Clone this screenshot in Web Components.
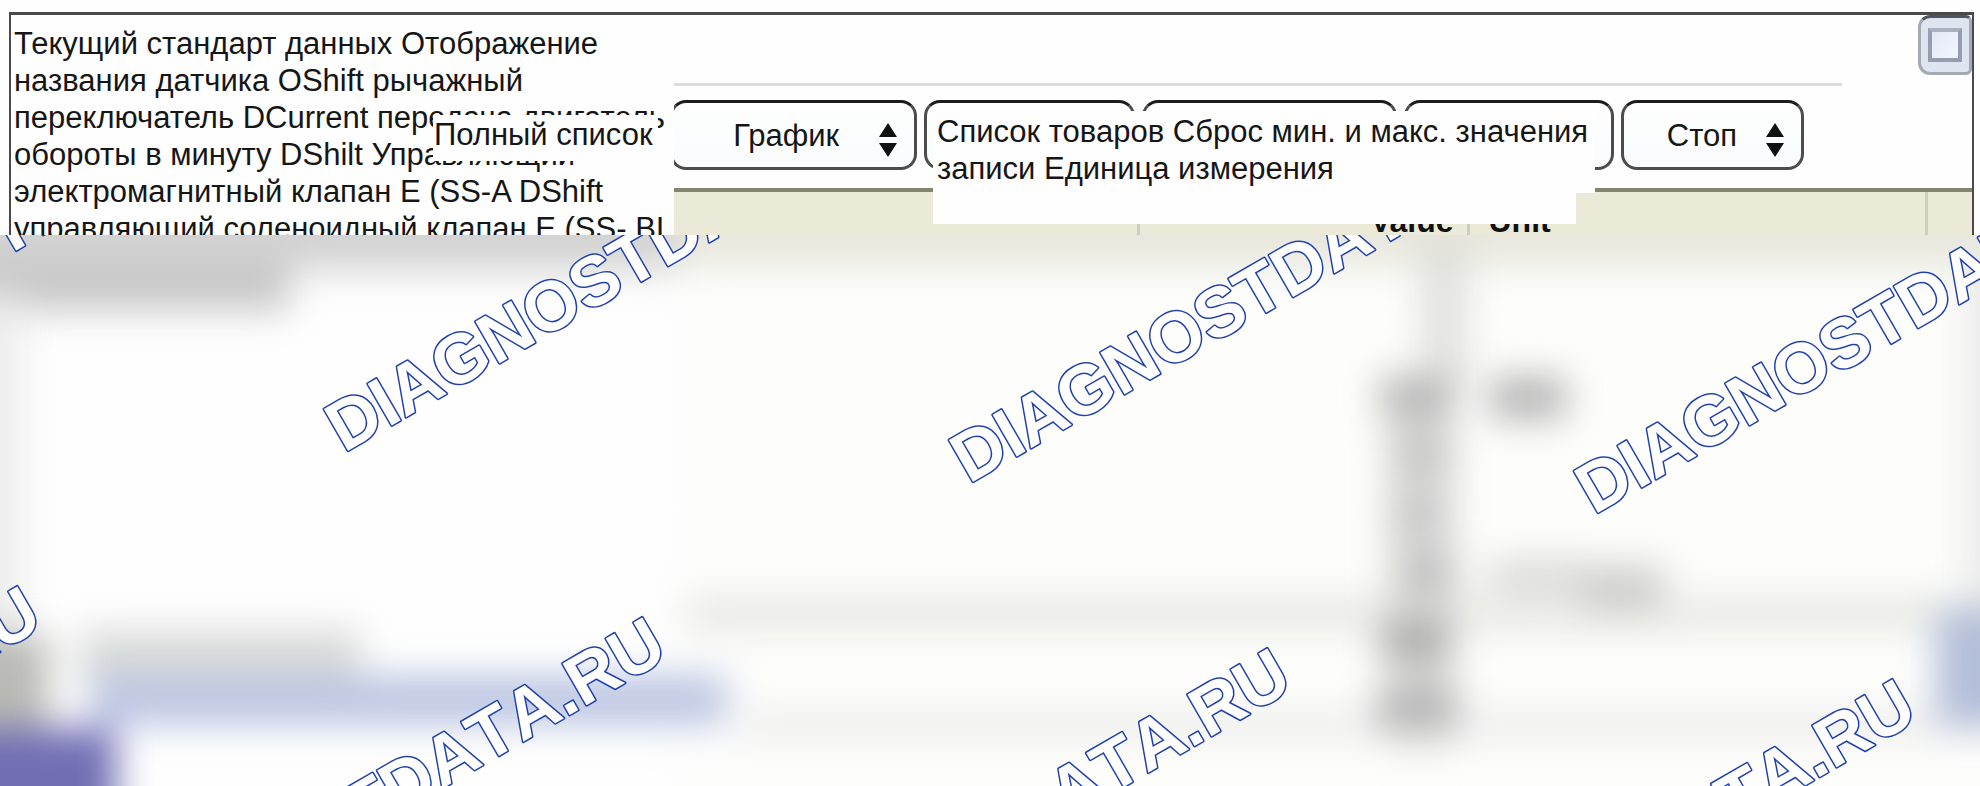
<!DOCTYPE html>
<html lang="ru">
<head>
<meta charset="utf-8">
<title>Текущий стандарт данных</title>
<style>
    body {
        margin: 0;
        min-height: 100vh;
        display: flex;
        flex-direction: column;
        background: #fefefe;
        color: #161616;
        font: 31px/37px "Liberation Sans", Arial, sans-serif;
        overflow: hidden;
    }
    .full-list { left: 422px; top: 100px; }
    .captions { left: 0; top: 10px; }
    .actions { left: 922px; top: 96px; }
</style>
</head>
<body>
    <scan-window>
        <title-strip slot="title"></title-strip>
        <tool-bar slot="tools">
            <tool-select label="Полный список"></tool-select>
            <tool-select label="График" value="График"></tool-select>
            <tool-select label="Список товаров"></tool-select>
            <tool-select label="Сброс мин. и макс."></tool-select>
            <tool-select label="Запись"></tool-select>
            <tool-select label="Стоп" value="Стоп" class="short"></tool-select>
        </tool-bar>
        <data-head></data-head>
        <text-note slot="notes" class="captions">
            <span>Текущий стандарт данных Отображение</span>
            <span>названия датчика OShift рычажный</span>
            <span>переключатель DCurrent передача двигатель</span>
            <span>обороты в минуту DShilt Управляющий</span>
            <span>электромагнитный клапан E (SS-A DShift</span>
            <span>управляющий соленоидный клапан E (SS- BI</span>
        </text-note>
        <text-note slot="notes" class="full-list">
            <span>Полный список</span>
        </text-note>
        <text-note slot="notes" class="actions">
            <span>Список товаров Сброс мин. и макс. значения</span>
            <span>записи Единица измерения</span>
        </text-note>
    </scan-window>
    <blurred-data></blurred-data>

<script>
class ScanWindow extends HTMLElement {
    constructor() {
        super();
        this.attachShadow({ mode: 'open' });
        this.shadowRoot.innerHTML = `
            <style>
                :host {
                    display: block;
                    position: relative;
                    overflow: hidden;
                    margin: 12px 6px 0 9px;
                    border: solid #4a4a4a;
                    border-width: 3px 2px 0;
                }
            </style>
            <slot name="title"></slot>
            <slot name="tools"></slot>
            <slot></slot>
            <slot name="notes"></slot>
        `;
    }
}
customElements.define('scan-window', ScanWindow);

class TitleStrip extends HTMLElement {
    constructor() {
        super();
        this.attachShadow({ mode: 'open' });
        this.shadowRoot.innerHTML = `
            <style>
                :host { display: flex; height: 71px; gap: 76px; align-items: flex-start; }
                .rule { flex: 1; align-self: stretch; border-bottom: 3px solid #dcdcdc; }
                button {
                    width: 54px;
                    height: 60px;
                    padding: 0;
                    display: grid;
                    place-items: center;
                    border: 3px solid #a4a9b6;
                    border-top-color: #50545e;
                    border-radius: 12px 6px 6px 12px;
                    background: #dfe4f1;
                }
                i {
                    width: 26px;
                    height: 26px;
                    border: 4px solid #969dae;
                    border-top-color: #aab0be;
                    background: linear-gradient(135deg, #e3e8f6, #f2f6fd);
                }
            </style>
            <div class="rule"></div>
            <button type="button" aria-label="Развернуть"><i></i></button>
        `;
    }
}
customElements.define('title-strip', TitleStrip);

class ToolBar extends HTMLElement {
    constructor() {
        super();
        this.attachShadow({ mode: 'open' });
        this.shadowRoot.innerHTML = `
            <style>
                :host {
                    display: grid;
                    grid-template-columns: 234fr 247fr 210fr 255fr 210fr 183fr;
                    gap: 7px;
                    padding: 14px 168px 18px 418px;
                }
            </style>
            <slot></slot>
        `;
    }
}
customElements.define('tool-bar', ToolBar);

class ToolSelect extends HTMLElement {
    constructor() {
        super();
        const label = this.getAttribute('label');
        const value = this.getAttribute('value') || '';
        this.attachShadow({ mode: 'open' });
        this.shadowRoot.innerHTML = `
            <style>
                :host { display: block; position: relative; height: 70px; --inset: 60px; }
                :host(.short) { --inset: 43px; }
                select {
                    appearance: none;
                    box-sizing: border-box;
                    width: 100%;
                    height: 100%;
                    margin: 0;
                    padding: 0 0 0 var(--inset);
                    border: 3px solid #4c4c4c;
                    border-top-color: #1c1c1c;
                    border-radius: 16px;
                    background: linear-gradient(#fefefe, #f9fbfc);
                    color: inherit;
                    font: inherit;
                }
                svg { position: absolute; right: 20px; top: 23px; pointer-events: none; }
            </style>
            <select aria-label="${label}"><option>${value}</option></select>
            <svg width="18" height="34" viewBox="0 0 18 34" fill="#111">
                <path d="M9 0 L18 14 H0 Z M0 20 H18 L9 34 Z"/>
            </svg>
        `;
    }
}
customElements.define('tool-select', ToolSelect);

class DataHead extends HTMLElement {
    constructor() {
        super();
        this.attachShadow({ mode: 'open' });
        this.shadowRoot.innerHTML = `
            <style>
                :host { display: block; border-top: 4px solid #84846f; background: #ebe9d8; }
                table { width: 100%; table-layout: fixed; border-collapse: collapse; }
                th {
                    box-sizing: border-box;
                    height: 43px;
                    padding: 0 13px 3px 19px;
                    border-right: 3px solid #cfcdc0;
                    vertical-align: bottom;
                    text-align: left;
                    font-size: 32px;
                    line-height: 22px;
                    color: #111;
                }
                th.num { text-align: right; }
                th:last-child { border: 0; padding: 0; }
            </style>
            <table>
                <colgroup><col style="width: 57.5%"><col style="width: 16.8%"><col><col style="width: 2.3%"></colgroup>
                <thead>
                    <tr><th></th><th class="num">Value</th><th>Unit</th><th></th></tr>
                </thead>
            </table>
        `;
    }
}
customElements.define('data-head', DataHead);

// white patches with the translated captions, they lie over the window
class TextNote extends HTMLElement {
    constructor() {
        super();
        this.attachShadow({ mode: 'open' });
        this.shadowRoot.innerHTML = `
            <style>
                :host { position: absolute; background: #fefefe; white-space: nowrap; }
                :host(.captions) { padding: 0 9px 0 3px; }
                :host(.full-list) { padding: 1px 5px 8px 1px; }
                :host(.actions) { padding: 2px 7px 6px 4px; }
                ::slotted(span) { display: block; }
                .tail { display: none; }
                :host(.actions) .tail {
                    display: block;
                    position: absolute;
                    left: 0;
                    right: 19px;
                    top: 100%;
                    height: 31px;
                    background: #fefefe;
                }
            </style>
            <slot></slot>
            <div class="tail"></div>
        `;
    }
}
customElements.define('text-note', TextNote);

// x, y, width, height, colour; drawn through the blur filter
const blobs = [
    [673, -60, 1400, 92, '#e7e7dc'],
    [-60, -60, 735, 96, '#d3d3d3'],
    [-60, 24, 350, 52, '#c8c8c8'],
    [-60, 60, 82, 560, '#ededed'],
    [1966, 0, 80, 400, '#e9eae9'],
    [685, 362, 1400, 34, '#e8e9e4'],
    [740, 478, 1300, 24, '#eaeaea'],
    [1422, 0, 44, 150, '#dfdfdb'],
    [1388, 140, 66, 370, '#d9d9d8'],
    [1380, 142, 74, 38, '#b6b6b6'],
    [1393, 205, 56, 30, '#c2c2c2'],
    [1393, 264, 50, 30, '#c3c3c3'],
    [1404, 320, 52, 36, '#bebebe'],
    [1380, 386, 70, 38, '#acacaa'],
    [1376, 454, 82, 38, '#b4b4b4'],
    [1490, 142, 76, 42, '#b4b4b4'],
    [1490, 326, 100, 30, '#d6d6d6'],
    [1580, 330, 84, 46, '#cfcfce'],
    [1936, 374, 100, 116, '#b3bed9'],
    [80, 395, 280, 52, '#d8dad8'],
    [-60, 400, 108, 100, '#b9b9b5'],
    [90, 440, 636, 50, '#bcc6e2'],
    [-60, 494, 176, 140, '#716eb4']
];

class BlurredData extends HTMLElement {
    constructor() {
        super();
        this.attachShadow({ mode: 'open' });
        this.shadowRoot.innerHTML = `
            <style>
                :host { display: block; position: relative; flex: 1; overflow: hidden; background: linear-gradient(90deg, #fefefe 32%, #fdfdfc 37%); }
                svg { position: absolute; left: 0; top: 0; width: 100%; height: 100%; }
                text {
                    font: bold 70px "Liberation Sans", Arial, sans-serif;
                    font-kerning: none;
                    fill: #fff;
                    stroke: #1f40ae;
                    stroke-width: 3px;
                    stroke-linejoin: round;
                    paint-order: stroke;
                }
            </style>
            <svg aria-hidden="true">
                <filter id="soft" filterUnits="userSpaceOnUse" x="-80" y="-80" width="2200" height="760" color-interpolation-filters="sRGB">
                    <feGaussianBlur stdDeviation="18"/>
                </filter>
                <g filter="url(#soft)">
                    ${blobs.map(b => `<rect x="${b[0]}" y="${b[1]}" width="${b[2]}" height="${b[3]}" fill="${b[4]}"/>`).join('')}
                </g>
                ${this.createMarks()}
            </svg>
        `;
    }

    createMarks() {
        let marks = '';
        for (let i = 0; i < 4; i++) {
            marks += this.createMark(-281 + i * 625, 187 + i * 31, 'start');
            marks += this.createMark(45 + i * 625, 391 + i * 31, 'end');
        }
        return marks;
    }

    createMark(x, y, anchor) {
        return `<text transform="translate(${x} ${y}) rotate(-30)" text-anchor="${anchor}">DIAGNOSTDATA.RU</text>`;
    }
}
customElements.define('blurred-data', BlurredData);
</script>
</body>
</html>
